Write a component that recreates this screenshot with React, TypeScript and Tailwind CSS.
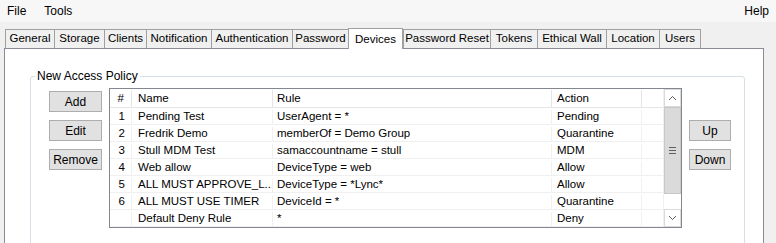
import React from 'react';

const TABS = [
  { label: 'General', w: 50 },
  { label: 'Storage', w: 51 },
  { label: 'Clients', w: 43 },
  { label: 'Notification', w: 66 },
  { label: 'Authentication', w: 82 },
  { label: 'Password', w: 57 },
  { label: 'Devices', w: 55, selected: true },
  { label: 'Password Reset', w: 88 },
  { label: 'Tokens', w: 48 },
  { label: 'Ethical Wall', w: 70 },
  { label: 'Location', w: 54 },
  { label: 'Users', w: 42 },
];

const POLICIES = [
  { n: '1', name: 'Pending Test', rule: 'UserAgent = *', action: 'Pending' },
  { n: '2', name: 'Fredrik Demo', rule: 'memberOf = Demo Group', action: 'Quarantine' },
  { n: '3', name: 'Stull MDM Test', rule: 'samaccountname = stull', action: 'MDM' },
  { n: '4', name: 'Web allow', rule: 'DeviceType = web', action: 'Allow' },
  { n: '5', name: 'ALL MUST APPROVE_L...', rule: 'DeviceType = *Lync*', action: 'Allow' },
  { n: '6', name: 'ALL MUST USE TIMER', rule: 'DeviceId = *', action: 'Quarantine' },
  { n: '', name: 'Default Deny Rule', rule: '*', action: 'Deny' },
];

function WinButton({ children, w = 'w-[53px]' }: { children: React.ReactNode; w?: string }) {
  return (
    <button className={`${w} h-[21px] bg-[#e1e1e1] border border-[#adadad] text-[12px] leading-none text-black`}>
      {children}
    </button>
  );
}

function Chevron({ up }: { up?: boolean }) {
  return (
    <svg width="9" height="6" viewBox="0 0 9 6" className="block">
      <polyline
        points={up ? '1,5 4.5,1.5 8,5' : '1,1 4.5,4.5 8,1'}
        fill="none"
        stroke="#606060"
        strokeWidth="1"
      />
    </svg>
  );
}

function ScrollBar() {
  return (
    <div className="w-[18px] flex flex-col bg-white border-l border-[#f0f0f0]">
      <div className="h-[18px] border border-[#dadada] flex items-center justify-center">
        <Chevron up />
      </div>
      <div className="h-[87px] bg-[#dadada] border border-[#c8c8c8] flex flex-col items-center justify-center gap-[2px]">
        <div className="w-[7px] h-px bg-[#606060]" />
        <div className="w-[7px] h-px bg-[#606060]" />
        <div className="w-[7px] h-px bg-[#606060]" />
      </div>
      <div className="flex-1" />
      <div className="h-[18px] border border-[#dadada] flex items-center justify-center">
        <Chevron />
      </div>
    </div>
  );
}

function PolicyList() {
  return (
    <div className="w-[573px] h-[140px] border border-[#828790] bg-white flex">
      <div className="flex-1 flex flex-col">
        <div className="h-[19px] flex items-center border-b border-[#e5e5e5] text-black pt-[1px]">
          <div className="w-[22px] h-full border-r border-[#e5e5e5] flex items-center justify-end pr-[7px]">#</div>
          <div className="w-[141px] h-full border-r border-[#e5e5e5] flex items-center pl-[6px]">Name</div>
          <div className="w-[279px] h-full border-r border-[#e5e5e5] flex items-center pl-[4px]">Rule</div>
          <div className="w-[90px] h-full border-r border-[#e5e5e5] flex items-center pl-[5px]">Action</div>
          <div className="flex-1" />
        </div>
        {POLICIES.map((p, i) => (
          <div key={i} className="h-[17px] flex items-center border-b border-[#f0f0f0] text-black pt-[2px]">
            <div className="w-[22px] h-full border-r border-[#f0f0f0] flex items-center justify-end pr-[6px]">{p.n}</div>
            <div className="w-[141px] h-full border-r border-[#f0f0f0] flex items-center pl-[6px] whitespace-nowrap overflow-hidden">{p.name}</div>
            <div className="w-[279px] h-full border-r border-[#f0f0f0] flex items-center pl-[4px] whitespace-nowrap">{p.rule}</div>
            <div className="w-[90px] h-full border-r border-[#f0f0f0] flex items-center pl-[5px]">{p.action}</div>
            <div className="flex-1" />
          </div>
        ))}
      </div>
      <ScrollBar />
    </div>
  );
}

export default function App() {
  return (
    <div
      className="w-[776px] h-[243px] bg-[#f0f0f0] flex flex-col overflow-hidden text-[11.5px] text-black"
      style={{ fontFamily: '"Liberation Sans", Arial, sans-serif' }}
    >
      {/* Menu strip */}
      <div className="h-[22px] bg-[#f7f7f7] flex items-center pl-[7px] pr-[7px] text-[12px]">
        <span className="mr-[18px]">File</span>
        <span>Tools</span>
        <span className="ml-auto">Help</span>
      </div>

      {/* Tab headers */}
      <div className="h-[26px] pt-[6px] pl-[5px] flex items-end whitespace-nowrap">
        {TABS.map((t, i) =>
          t.selected ? (
            <div
              key={t.label}
              style={{ width: t.w }}
              className="relative z-10 -ml-px mb-[-1px] h-[21px] bg-white border border-b-0 border-[#a0a0a0] flex items-start justify-center pt-[2px]"
            >
              {t.label}
            </div>
          ) : (
            <div
              key={t.label}
              style={{ width: t.w }}
              className={`h-[19px] bg-[#f0f0f0] border border-b-0 border-[#a0a0a0] flex items-center justify-center ${
                i === 0 || TABS[i - 1].selected ? '' : '-ml-px'
              }`}
            >
              {t.label}
            </div>
          )
        )}
      </div>

      {/* Tab page */}
      <div className="flex-1 ml-[4px] w-[760px] bg-white border border-b-0 border-[#898c95] overflow-hidden">
        <fieldset className="mt-[20px] ml-[25px] w-[715px] h-[200px] border border-[#d5dfe5] rounded-[3px] pl-[18px] pt-[5px]">
          <legend className="-ml-[14px] px-[2px] leading-[14px] text-[12px]">New Access Policy</legend>
          <div className="flex items-start">
            <div className="flex flex-col gap-[8px] mt-[3px]">
              <WinButton>Add</WinButton>
              <WinButton>Edit</WinButton>
              <WinButton>Remove</WinButton>
            </div>
            <div className="ml-[7px]">
              <PolicyList />
            </div>
            <div className="ml-[7px] mt-[32px] flex flex-col gap-[8px]">
              <WinButton w="w-[42px]">Up</WinButton>
              <WinButton w="w-[42px]">Down</WinButton>
            </div>
          </div>
        </fieldset>
      </div>
    </div>
  );
}
